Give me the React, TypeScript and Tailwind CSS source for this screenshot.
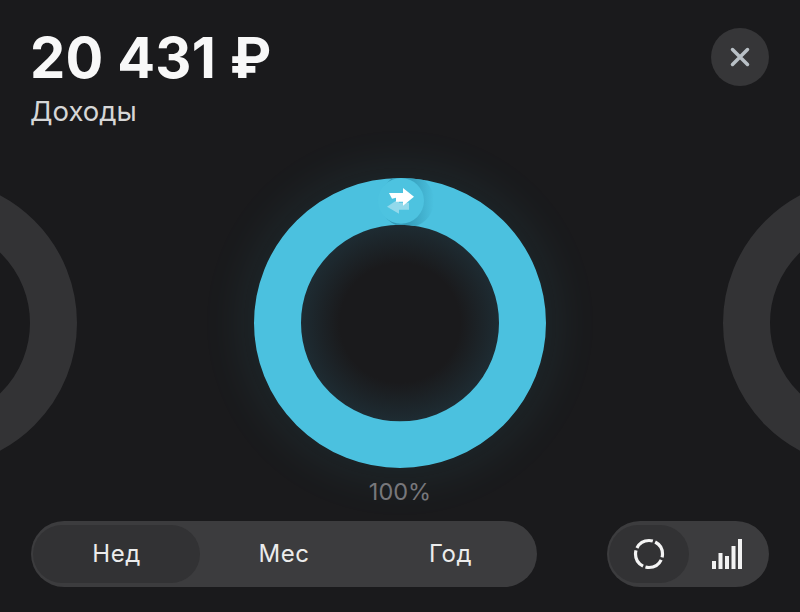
import React from "react";

function Ring({ active }: { active?: boolean }) {
  if (!active) {
    return (
      <svg width="292" height="290" viewBox="0 0 292 292" preserveAspectRatio="none" className="shrink-0">
        <circle cx="146" cy="146" r="122.5" fill="none" stroke="#333335" strokeWidth="47" />
      </svg>
    );
  }
  return (
    <div className="w-[292px] h-[290px] shrink-0 rounded-full shadow-[0_0_50px_8px_rgba(73,196,226,0.09)]">
      <svg width="292" height="290" viewBox="0 0 292 292" preserveAspectRatio="none" className="block">
        <defs>
          <radialGradient id="inner" cx="50%" cy="50%" r="50%">
            <stop offset="60%" stopColor="#1a1a1c" />
            <stop offset="100%" stopColor="#1e2c33" />
          </radialGradient>
          <linearGradient id="shade" x1="0" y1="0" x2="1" y2="0">
            <stop offset="0.45" stopColor="#3399b6" />
            <stop offset="1" stopColor="#4bc1df" />
          </linearGradient>
          <mask id="band">
            <circle cx="146" cy="146" r="122.5" fill="none" stroke="#ffffff" strokeWidth="47" />
          </mask>
        </defs>
        <circle cx="146" cy="146" r="100" fill="url(#inner)" />
        <circle cx="146" cy="146" r="122.5" fill="none" stroke="#4bc1df" strokeWidth="47" />
        <g mask="url(#band)">
          <circle cx="153" cy="23" r="27" fill="url(#shade)" />
          <circle cx="147" cy="23" r="23" fill="#4dc3e0" />
        </g>
        <path d="M155 25h-10v-4l-12 8 12 7v-4h10z" fill="#a9e0ef" opacity="0.75" />
        <path d="M135 15h14v-5l11 9-11 9v-4h-7v-4l-4 1z" fill="#ffffff" />
      </svg>
    </div>
  );
}

function DonutIcon() {
  return (
    <svg width="32" height="32" viewBox="0 0 32 32" fill="none" stroke="#f4f4f4" strokeWidth="3.200">
      <circle cx="16" cy="16" r="13.500" strokeDasharray="18.700 2.500" strokeDashoffset="-6" />
    </svg>
  );
}

function BarsIcon() {
  return (
    <svg width="32" height="32" viewBox="0 0 32 32" fill="#f2f2f2">
      <rect x="0" y="23" width="4" height="8" />
      <rect x="6.500" y="15" width="4" height="16" />
      <rect x="13" y="18" width="4" height="13" />
      <rect x="19.500" y="8" width="4" height="23" />
      <rect x="26" y="1" width="4" height="30" />
    </svg>
  );
}

export default function App() {
  return (
    <div className="w-[800px] h-[612px] bg-[#1a1a1c] overflow-hidden flex flex-col text-white font-['Inter','Liberation_Sans',sans-serif]">
      <header className="flex justify-between items-start pl-[30px] pr-[31px] pt-[28px] h-[178px] shrink-0">
        <div>
          <div className="text-[56px] leading-[60px] font-bold tracking-[0.3px] text-[#f8f8f8]">20 431 ₽</div>
          <div className="mt-[7px] text-[27.500px] leading-[32px] text-[#d6d6d6]">Доходы</div>
        </div>
        <button className="w-[58px] h-[58px] rounded-full bg-[#363638] flex items-center justify-center">
          <svg width="22" height="22" viewBox="0 0 22 22" stroke="#b9c0c6" strokeWidth="3.500" strokeLinecap="round">
            <path d="M3.500 3.500l15 15M18.500 3.500l-15 15" />
          </svg>
        </button>
      </header>

      <div className="flex justify-center gap-[177px] h-[290px] shrink-0">
        <Ring />
        <Ring active />
        <Ring />
      </div>

      <div className="text-center text-[23.500px] leading-[26px] mt-[11px] text-[#77777b]">100%</div>

      <div className="flex justify-between items-center px-[31px] mt-[16px]">
        <div className="w-[506px] h-[66px] rounded-full bg-[#3c3c3e] pl-[2px] flex items-center text-[24px] tracking-[0.5px] text-[#ececec]">
          <div className="w-[167px] h-[58px] rounded-full bg-[#323234] flex items-center justify-center">Нед</div>
          <div className="w-[168px] text-center">Мес</div>
          <div className="w-[165px] text-center">Год</div>
        </div>
        <div className="w-[162px] h-[66px] rounded-full bg-[#3c3c3e] pl-[2px] flex items-center">
          <div className="w-[80px] h-[58px] rounded-full bg-[#323234] flex items-center justify-center">
            <DonutIcon />
          </div>
          <div className="ml-[23px]">
            <BarsIcon />
          </div>
        </div>
      </div>
    </div>
  );
}
